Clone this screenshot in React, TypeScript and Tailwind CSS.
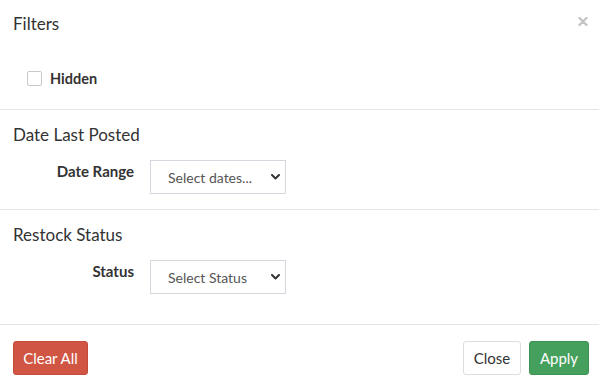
function FakeSelect({ label, placeholder }: { label: string; placeholder: string }) {
  return (
    <div className="flex items-start">
      <label className="w-[134px] pt-[1px] text-right text-[15px] font-bold leading-[20px] text-[#333]">
        {label}
      </label>
      <div className="ml-[16px] flex h-[34px] w-[136px] items-center justify-between border border-[#d6d6de] bg-white pl-[17px] pr-[4px] text-[14px] text-[#555]">
        <span>{placeholder}</span>
        <svg width="9" height="6" viewBox="0 0 9 6" className="mr-[1px]">
          <path d="M1 1 L4.5 4.5 L8 1" fill="none" stroke="#333" strokeWidth="2" strokeLinecap="round" strokeLinejoin="round" />
        </svg>
      </div>
    </div>
  );
}

export default function App() {
  return (
    <div className="h-[386px] w-[599px] overflow-hidden bg-white font-['Lato',sans-serif] text-[#333]">
      {/* Header */}
      <div className="flex h-[48px] items-center justify-between pl-[13px] pr-[11px]">
        <h4 className="text-[17px] leading-[20px]">Filters</h4>
        <button className="-mt-[5px] flex h-[10px] w-[10px] items-center justify-center">
          <svg width="10" height="9" viewBox="0 0 10 9">
            <path d="M1.5 1 L8.5 8 M8.5 1 L1.5 8" stroke="#c4c4c4" strokeWidth="2.4" strokeLinecap="round" />
          </svg>
        </button>
      </div>

      {/* Hidden toggle */}
      <div className="flex h-[61px] items-center pl-[27px]">
        <span className="h-[15px] w-[15px] rounded-[2px] border border-[#c8c8c8] bg-white" />
        <span className="ml-[8px] text-[14.5px] font-bold">Hidden</span>
      </div>

      {/* Date Last Posted */}
      <div className="border-t border-[#e5e5e5] pb-[15px]">
        <div className="flex h-[50px] items-center pl-[13px]">
          <h4 className="text-[17px] leading-[20px]">Date Last Posted</h4>
        </div>
        <FakeSelect label="Date Range" placeholder="Select dates..." />
      </div>

      {/* Restock Status */}
      <div className="border-t border-[#e5e5e5] pb-[30px]">
        <div className="flex h-[50px] items-center pl-[13px]">
          <h4 className="text-[17px] leading-[20px]">Restock Status</h4>
        </div>
        <FakeSelect label="Status" placeholder="Select Status" />
      </div>

      {/* Footer */}
      <div className="flex items-center justify-between border-t border-[#e5e5e5] pl-[13px] pr-[10px] pt-[16px]">
        <button className="h-[34px] w-[75px] rounded-[3px] border border-[#c44b39] bg-[#d05543] text-[15px] text-white">
          Clear All
        </button>
        <div className="flex gap-[8px]">
          <button className="h-[34px] w-[58px] rounded-[3px] border border-[#ddd] bg-white text-[15px] text-[#333]">
            Close
          </button>
          <button className="h-[34px] w-[60px] rounded-[3px] border border-[#3d9354] bg-[#45a05d] text-[15px] text-white">
            Apply
          </button>
        </div>
      </div>
    </div>
  );
}
